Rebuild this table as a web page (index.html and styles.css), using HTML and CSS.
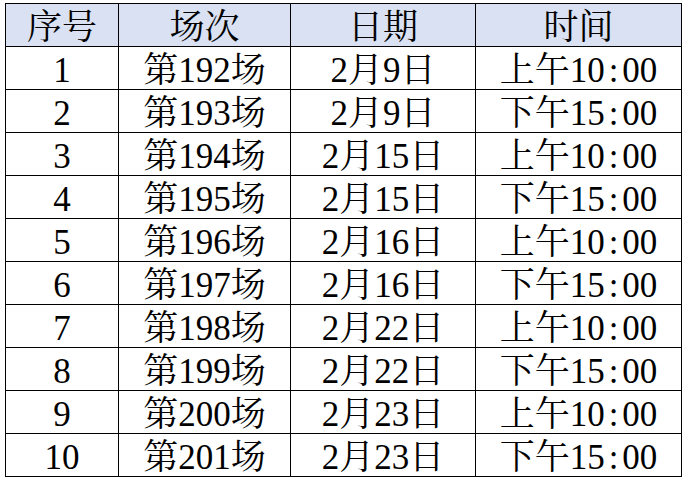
FILE: index.html
```html
<!DOCTYPE html>
<html lang="zh-CN">
<head>
<meta charset="utf-8">
<title>场次安排</title>
<link rel="stylesheet" href="styles.css">
</head>
<body>
<div class="sheet">
<table class="schedule">
<colgroup>
<col class="c-no"><col class="c-session"><col class="c-date"><col class="c-time">
</colgroup>
<thead>
<tr><th>序号</th><th>场次</th><th>日期</th><th>时间</th></tr>
</thead>
<tbody>
<tr><td>1</td><td>第192场</td><td>2月9日</td><td>上午10<span class="colon">:</span>00</td></tr>
<tr><td>2</td><td>第193场</td><td>2月9日</td><td>下午15<span class="colon">:</span>00</td></tr>
<tr><td>3</td><td>第194场</td><td>2月15日</td><td>上午10<span class="colon">:</span>00</td></tr>
<tr><td>4</td><td>第195场</td><td>2月15日</td><td>下午15<span class="colon">:</span>00</td></tr>
<tr><td>5</td><td>第196场</td><td>2月16日</td><td>上午10<span class="colon">:</span>00</td></tr>
<tr><td>6</td><td>第197场</td><td>2月16日</td><td>下午15<span class="colon">:</span>00</td></tr>
<tr><td>7</td><td>第198场</td><td>2月22日</td><td>上午10<span class="colon">:</span>00</td></tr>
<tr><td>8</td><td>第199场</td><td>2月22日</td><td>下午15<span class="colon">:</span>00</td></tr>
<tr><td>9</td><td>第200场</td><td>2月23日</td><td>上午10<span class="colon">:</span>00</td></tr>
<tr><td>10</td><td>第201场</td><td>2月23日</td><td>下午15<span class="colon">:</span>00</td></tr>
</tbody>
</table>
</div>
</body>
</html>
```
FILE: styles.css
```css
html, body {
  margin: 0;
  padding: 0;
  background: #ffffff;
}
.sheet {
  padding: 3px 0 0 5px;
  border-left: 1px solid #e1e1e1;
  margin-left: -1px;
  height: 482px;
  box-sizing: border-box;
}
.schedule {
  border-collapse: collapse;
  table-layout: fixed;
  width: 677px;
  font-family: "Liberation Serif", "Noto Serif CJK SC", "Noto Sans CJK SC", serif;
  font-size: 35px;
  color: #000;
}
.c-no { width: 113px; }
.c-session { width: 172px; }
.c-date { width: 185px; }
.c-time { width: 206px; }
.schedule th,
.schedule td {
  border: 1px solid #000;
  height: 37px;
  padding: 5px 0 0;
  text-align: center;
  vertical-align: middle;
  font-weight: normal;
  line-height: 37px;
  white-space: nowrap;
}
.schedule thead th {
  background: #d9e1f2;
}
.colon {
  display: inline-block;
  width: 0.5em;
  text-align: center;
}
```
